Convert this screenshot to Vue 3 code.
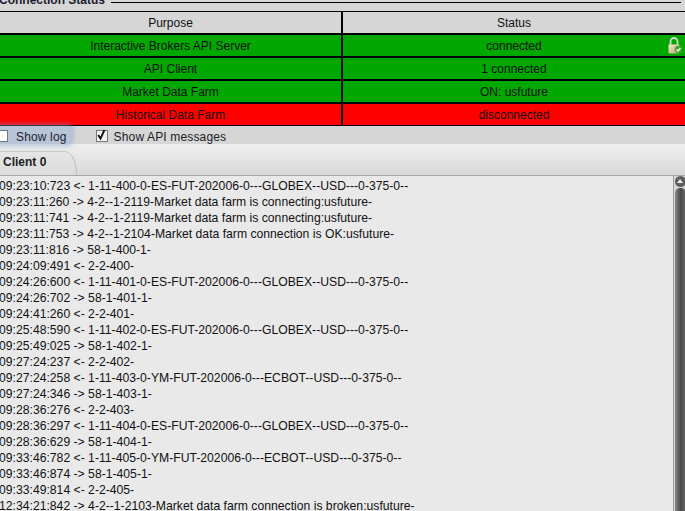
<script setup>
const rows = [
  { purpose: 'Interactive Brokers API Server', status: 'connected', tone: 'ok', lock: true },
  { purpose: 'API Client', status: '1 connected', tone: 'ok' },
  { purpose: 'Market Data Farm', status: 'ON: usfuture', tone: 'ok' },
  { purpose: 'Historical Data Farm', status: 'disconnected', tone: 'bad' },
]
const log = [
  '09:23:10:723 <- 1-11-400-0-ES-FUT-202006-0---GLOBEX--USD---0-375-0--',
  '09:23:11:260 -> 4-2--1-2119-Market data farm is connecting:usfuture-',
  '09:23:11:741 -> 4-2--1-2119-Market data farm is connecting:usfuture-',
  '09:23:11:753 -> 4-2--1-2104-Market data farm connection is OK:usfuture-',
  '09:23:11:816 -> 58-1-400-1-',
  '09:24:09:491 <- 2-2-400-',
  '09:24:26:600 <- 1-11-401-0-ES-FUT-202006-0---GLOBEX--USD---0-375-0--',
  '09:24:26:702 -> 58-1-401-1-',
  '09:24:41:260 <- 2-2-401-',
  '09:25:48:590 <- 1-11-402-0-ES-FUT-202006-0---GLOBEX--USD---0-375-0--',
  '09:25:49:025 -> 58-1-402-1-',
  '09:27:24:237 <- 2-2-402-',
  '09:27:24:258 <- 1-11-403-0-YM-FUT-202006-0---ECBOT--USD---0-375-0--',
  '09:27:24:346 -> 58-1-403-1-',
  '09:28:36:276 <- 2-2-403-',
  '09:28:36:297 <- 1-11-404-0-ES-FUT-202006-0---GLOBEX--USD---0-375-0--',
  '09:28:36:629 -> 58-1-404-1-',
  '09:33:46:782 <- 1-11-405-0-YM-FUT-202006-0---ECBOT--USD---0-375-0--',
  '09:33:46:874 -> 58-1-405-1-',
  '09:33:49:814 <- 2-2-405-',
  '12:34:21:842 -> 4-2--1-2103-Market data farm connection is broken:usfuture-',
]
</script>

<template>
  <div class="page">
    <div class="legend">
      <span class="legend-text">Connection Status</span>
      <span class="legend-line"></span>
    </div>

    <div class="table">
      <div class="row head">
        <div class="cell purpose">Purpose</div>
        <div class="cell status">Status</div>
      </div>
      <div v-for="r in rows" :key="r.purpose" class="row" :class="r.tone">
        <div class="cell purpose">{{ r.purpose }}</div>
        <div class="cell status">
          {{ r.status }}
          <svg v-if="r.lock" class="lock" width="16" height="17" viewBox="0 0 16 17">
            <defs>
              <linearGradient id="body" x1="0" y1="0" x2="1" y2="1">
                <stop offset="0" stop-color="#f6ebc8" />
                <stop offset="1" stop-color="#bfa274" />
              </linearGradient>
            </defs>
            <path d="M3.5 8V4.5a3.5 3.5 0 0 1 7 0V8" fill="none" stroke="#d8d8cf" stroke-width="1.8" />
            <rect x="1.5" y="7.5" width="11" height="9" rx="1" fill="url(#body)" />
            <circle cx="11.5" cy="12.5" r="3.8" fill="#3fa82c" />
            <path d="M9.6 12.5l1.4 1.5 2.4-2.8" fill="none" stroke="#fff" stroke-width="1.3" />
          </svg>
        </div>
      </div>
    </div>

    <div class="options">
      <label class="opt focused">
        <span class="box"></span>
        <span>Show log</span>
      </label>
      <label class="opt api">
        <span class="box checked">
          <svg width="11" height="12" viewBox="0 0 11 12">
            <path d="M2.2 6l2.3 3.6L8.4 1" fill="none" stroke="#111" stroke-width="1.9" />
          </svg>
        </span>
        <span>Show API messages</span>
      </label>
    </div>

    <div class="tabs">
      <div class="tab">Client 0</div>
    </div>

    <div class="log-wrap">
      <div class="log">
        <div v-for="(l, i) in log" :key="i" class="line">{{ l }}</div>
      </div>
      <div class="scrollbar">
        <span class="arrow"></span>
        <span class="thumb"></span>
      </div>
    </div>
  </div>
</template>

<style>
html, body { margin: 0; overflow: hidden; background: #d6d6d6; }
</style>

<style scoped>
.page {
  width: 685px;
  height: 511px;
  overflow: hidden;
  display: flex;
  flex-direction: column;
  background: #d6d6d6;
  font: 12px "Liberation Sans", Arial, sans-serif;
  color: #111;
}
.legend {
  height: 11px;
  display: flex;
  align-items: flex-start;
  flex: none;
  gap: 6px;
}
.legend-text {
  margin-top: -7px;
  margin-left: -1px;
  line-height: 14px;
  font-weight: bold;
  color: #1c1c30;
}
.legend-line {
  flex: 1;
  height: 1px;
  margin-top: 2px;
  margin-right: 4px;
  background: #000;
}
.table {
  flex: none;
  border-top: 1px solid #000;
}
.row {
  display: flex;
  box-sizing: border-box;
  height: 23px;
  border-bottom: 2px solid #000;
}
.head { background: #d6d6d6; }
.ok { background: #00a800; }
.bad { background: #ff0000; height: 22px; border-bottom-width: 1px; }
.cell {
  position: relative;
  text-align: center;
  line-height: 23px;
  white-space: nowrap;
}
.purpose { width: 341px; }
.status {
  flex: 1;
  border-left: 2px solid #000;
}
.lock {
  position: absolute;
  right: 2px;
  top: 2px;
}
.options {
  flex: none;
  height: 18px;
  display: flex;
  color: #1a1a2a;
  position: relative;
  z-index: 1;
}
.opt {
  display: flex;
  align-items: center;
  box-sizing: border-box;
  height: 18px;
  padding-top: 3px;
  gap: 6px;
  letter-spacing: 0.15px;
}
.focused {
  margin-left: -4px;
  padding-right: 4px;
  gap: 8px;
  background: rgba(130, 165, 215, 0.35);
  box-shadow: 0 0 5px 2px rgba(120, 155, 210, 0.5);
  border-radius: 3px;
  color: #223;
}
.api { margin-left: 25px; }
.box {
  width: 10px;
  height: 10px;
  margin-top: -1px;
  border: 1px solid #777;
  background: #fff;
  display: block;
  flex: none;
  position: relative;
}
.box.checked {
  background: #f2f2f2;
}
.box svg { position: absolute; left: -1px; top: -2px; }
.tabs {
  flex: none;
  height: 32px;
  background: linear-gradient(#f0f0f0, #d8d8d8);
  border-bottom: 1px solid #a8a8a8;
  box-sizing: border-box;
  display: flex;
  align-items: flex-end;
}
.tab {
  width: 77px;
  height: 24px;
  box-sizing: border-box;
  padding-left: 3px;
  line-height: 20px;
  font-weight: bold;
  color: #222;
  background: linear-gradient(#e6e6e6, #dcdcdc);
  border-top: 1px solid #c8c8c8;
  border-right: 1px solid #bdbdbd;
  border-top-right-radius: 12px 24px;
}
.log-wrap {
  flex: 1;
  min-height: 0;
  display: flex;
  background: #d6d6d6;
}
.log {
  width: 674px;
  flex: none;
  box-sizing: border-box;
  overflow: hidden;
  background: #e9e9e9;
  border-right: 1px solid #a0a0a0;
  padding-top: 2px;
}
.line {
  height: 16px;
  line-height: 16px;
  margin-left: -1px;
  white-space: nowrap;
  color: #111;
  font-size: 12.2px;
}
.scrollbar {
  position: relative;
  flex: 1;
}
.arrow {
  position: absolute;
  left: 1px;
  top: 0;
  width: 11px;
  height: 11px;
  border-radius: 50%;
  background: #5e5e5e;
}
.arrow::after {
  content: "";
  position: absolute;
  left: 2px;
  top: 3px;
  border: 3.5px solid transparent;
  border-top: 0;
  border-bottom: 4px solid #eee;
}
.thumb {
  position: absolute;
  left: 1px;
  top: 12px;
  width: 11px;
  bottom: -20px;
  border-radius: 5px 5px 0 0;
  background: linear-gradient(90deg, #8a8a8a, #4a4a4a 50%, #6a6a6a);
}
</style>
